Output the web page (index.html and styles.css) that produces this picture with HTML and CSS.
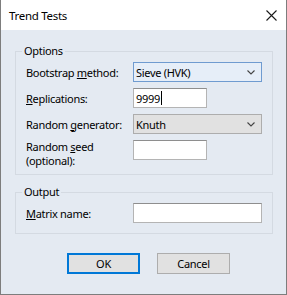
FILE: index.html
```html
<!DOCTYPE html>
<html lang="en">
<head>
    <meta charset="UTF-8">
    <title>Trend Tests</title>
    <link rel="stylesheet" href="styles.css">
</head>
<body>

    <div class="dialog">

        <!-- title bar -->
        <div class="titlebar">
            <span class="title">Trend Tests</span>
            <svg class="close" width="11" height="11" viewBox="0 0 11 11">
                <path d="M0.5 0.5 L10.5 10.5 M10.5 0.5 L0.5 10.5" stroke="#1a1a1a" stroke-width="1.1" fill="none"/>
            </svg>
        </div>

        <div class="content">

            <fieldset class="group options">
                <legend>Options</legend>

                <div class="row">
                    <label>Bootstrap <u>m</u>ethod:</label>
                    <div class="combo hot">
                        <span>Sieve (HVK)</span>
                        <svg class="chev" width="8" height="5" viewBox="0 0 8 5"><path d="M0.5 0.5 L4 4 L7.5 0.5" stroke="#444" stroke-width="1.1" fill="none"/></svg>
                    </div>
                </div>

                <div class="row">
                    <label><u>R</u>eplications:</label>
                    <div class="edit"><span>9999</span><span class="caret"></span></div>
                </div>

                <div class="row">
                    <label>Random <u>g</u>enerator:</label>
                    <div class="combo">
                        <span>Knuth</span>
                        <svg class="chev" width="8" height="5" viewBox="0 0 8 5"><path d="M0.5 0.5 L4 4 L7.5 0.5" stroke="#444" stroke-width="1.1" fill="none"/></svg>
                    </div>
                </div>

                <div class="row tall">
                    <label class="two-line">Random <u>s</u>eed<br>(optional):</label>
                    <div class="edit"></div>
                </div>
            </fieldset>

            <fieldset class="group output">
                <legend>Output</legend>
                <div class="row">
                    <label><u>M</u>atrix name:</label>
                    <div class="edit wide"></div>
                </div>
            </fieldset>

            <div class="buttons">
                <button class="btn default">OK</button>
                <button class="btn">Cancel</button>
            </div>

        </div>
    </div>

</body>
</html>
```

FILE: styles.css
```css
body {
    margin: 0;
    padding: 0;
    background: #e4eaf2;
    font-family: 'Noto Sans', 'Open Sans', sans-serif;
    font-size: 11px;
    letter-spacing: -0.3px;
    color: #000;
}

.dialog {
    width: 287px;
    height: 295px;
    box-sizing: border-box;
    border: 1px solid #7d7d7d;
    border-top: none;
    background: #e4eaf2;
}

.titlebar {
    height: 30px;
    background: #fff;
    display: flex;
    align-items: center;
    justify-content: space-between;
    padding: 0 9px 0 8px;
}

.title {
    font-size: 11.5px;
}

.close {
    display: block;
}

.content {
    padding: 13px 13px 0 14px;
}

.group {
    margin: 0;
    border: 1px solid #d4dae2;
    padding: 3px 0 0 10px;
}

.group legend {
    padding: 0 2px;
    margin-left: -4px;
    line-height: 16px;
}

.options {
    padding-bottom: 7px;
}

.output {
    margin-top: 9px;
    padding-bottom: 10px;
}

.row {
    display: flex;
    align-items: center;
    height: 20px;
    margin-bottom: 6px;
}

.row:last-child {
    margin-bottom: 0;
}

.row.tall {
    align-items: flex-start;
    height: 27px;
}

.row label {
    width: 107px;
    flex-shrink: 0;
}

.two-line {
    line-height: 14px;
}

.combo {
    width: 129px;
    height: 20px;
    box-sizing: border-box;
    border: 1px solid #adadad;
    background: #e1e1e1;
    display: flex;
    align-items: center;
    justify-content: space-between;
    padding: 0 6px 0 2px;
}

.combo.hot {
    border-color: #6f9bd0;
    background: #e6eef8;
}

.chev {
    display: block;
}

.edit {
    width: 74px;
    height: 20px;
    box-sizing: border-box;
    border: 1px solid #b4b4b4;
    border-top-color: #8e8e8e;
    background: #fff;
    display: flex;
    align-items: center;
    padding-left: 2px;
}

.edit.wide {
    width: 129px;
}

.caret {
    width: 1px;
    height: 14px;
    margin-left: 1px;
    background: #000;
}

.buttons {
    display: flex;
    gap: 17px;
    padding: 19px 0 0 52px;
}

.btn {
    width: 73px;
    height: 21px;
    box-sizing: border-box;
    border: 1px solid #adadad;
    background: #e1e1e1;
    font-family: inherit;
    font-size: 11px;
    letter-spacing: -0.3px;
    padding: 0;
    color: #000;
}

.btn.default {
    border: 2px solid #0078d7;
}
```
